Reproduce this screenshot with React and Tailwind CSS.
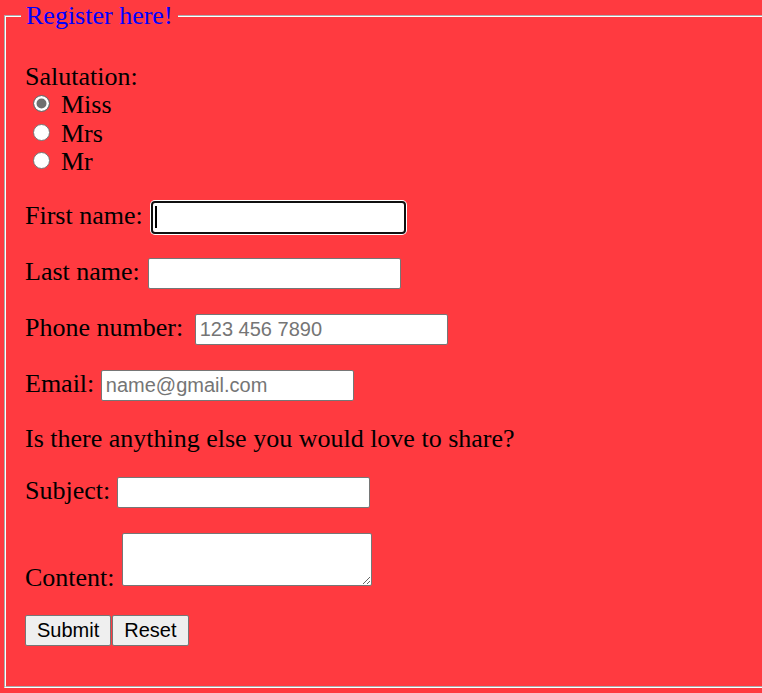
function TextField({ id, label, type = 'text', placeholder, shift = '' }) {
  return (
    <div className="h-[56px] leading-[30px]">
      <label htmlFor={id}>{label}</label>{' '}
      <input
        id={id}
        type={type}
        placeholder={placeholder}
        className={`${shift} w-[253px] h-[31px] align-baseline bg-white border border-[#767676] rounded-[2px] pl-[4px] pr-[2px] py-[3px] font-['Liberation_Sans',Arial,sans-serif] text-[20px] leading-[23px] text-black placeholder:text-[#757575] outline-none`}
      />
    </div>
  );
}

function Radio({ label, checked }) {
  return (
    <div className="h-[28.5px] leading-[28.5px]">
      <label>
        <input
          type="radio"
          name="salutation"
          defaultChecked={checked}
          className="appearance-none inline-block align-baseline w-[17px] h-[17px] mb-[1px] ml-[8px] mr-[11px] rounded-full border border-[#767676] bg-white checked:border-[#6f6f6f] checked:bg-[#6f6f6f] checked:shadow-[inset_0_0_0_2.5px_white]"
        />
        {label}
      </label>
    </div>
  );
}

export default function App() {
  return (
    <div className="w-full h-[693px] overflow-hidden bg-[#ff3a40] font-['Liberation_Serif','Times_New_Roman',serif] text-[26px] text-black">
      <fieldset className="ml-[4px] w-[800px] border-2 [border-style:groove] border-white pl-[19px] pb-[40px]">
        <legend className="ml-[-4px] px-[5px] leading-[32px] text-[#0000ff]">Register here!</legend>

        {/* Salutation */}
        <div className="mt-[30px] h-[29px] leading-[29px]">Salutation:</div>
        <Radio label="Miss" checked />
        <Radio label="Mrs" />
        <Radio label="Mr" />

        {/* First name (focused) */}
        <div className="mt-[24px] h-[56px] leading-[30px]">
          <label htmlFor="first">First name:</label>{' '}
          <span className="inline-flex align-baseline w-[255px] h-[33px] ml-[2px] bg-white border-2 border-[#101010] rounded-[4px] shadow-[0_0_0_1px_white]">
            <input
              id="first"
              type="text"
              className="order-2 self-baseline flex-1 min-w-0 h-[29px] py-[3px] pl-[2px] font-['Liberation_Sans',Arial,sans-serif] text-[20px] leading-[23px] outline-none bg-transparent"
            />
            <span className="order-1 self-center ml-[2px] w-[2px] h-[22px] bg-black" />
          </span>
        </div>

        <TextField id="last" label="Last name:" shift="ml-[2px]" />
        <TextField id="phone" label="Phone number:" type="tel" placeholder="123 456 7890" shift="ml-[5px]" />
        <TextField id="email" label="Email:" type="email" placeholder="name@gmail.com" />

        <div className="h-[51px] leading-[28px]">Is there anything else you would love to share?</div>

        <div className="h-[57px] leading-[30px]">
          <label htmlFor="subject">Subject:</label>{' '}
          <input
            id="subject"
            type="text"
            className="w-[253px] h-[31px] align-baseline bg-white border border-[#767676] rounded-[2px] pl-[4px] py-[3px] font-['Liberation_Sans',Arial,sans-serif] text-[20px] leading-[23px] outline-none"
          />
        </div>

        <div className="h-[81px] leading-[30px]">
          <label htmlFor="content">Content:</label>{' '}
          <textarea
            id="content"
            className="w-[250px] h-[53px] ml-[1px] align-baseline bg-white border border-[#767676] rounded-[2px] p-[2px] font-['Liberation_Sans',Arial,sans-serif] text-[16px] outline-none"
          />
        </div>

        <div className="leading-[30px]">
          <button
            type="submit"
            className="h-[31px] align-baseline px-[11px] py-[3px] bg-[#efefef] border border-[#767676] rounded-[2px] font-['Liberation_Sans',Arial,sans-serif] text-[20px] leading-[23px] text-black"
          >
            Submit
          </button>
          <button
            type="reset"
            className="ml-[1px] h-[31px] align-baseline px-[11px] py-[3px] bg-[#efefef] border border-[#767676] rounded-[2px] font-['Liberation_Sans',Arial,sans-serif] text-[20px] leading-[23px] text-black"
          >
            Reset
          </button>
        </div>
      </fieldset>
    </div>
  );
}
